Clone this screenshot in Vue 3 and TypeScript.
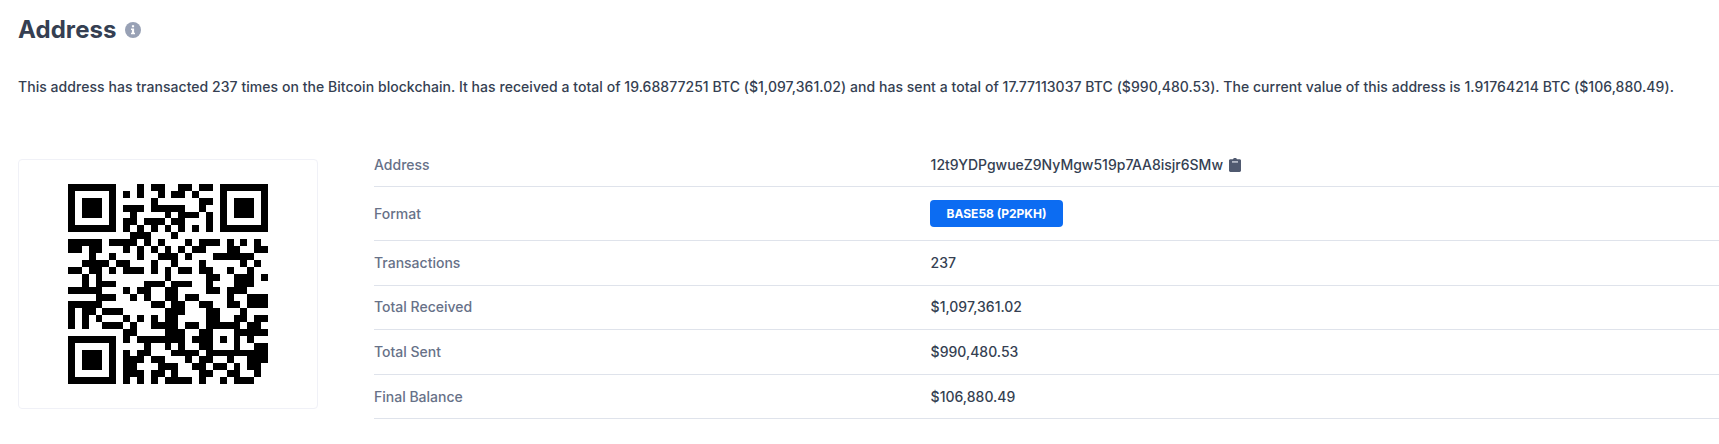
<script setup lang="ts">
interface Row {
  label: string
  value: string
  kind?: 'address' | 'badge'
}

const summary =
  'This address has transacted 237 times on the Bitcoin blockchain. It has received a total of 19.68877251 BTC ($1,097,361.02) and has sent a total of 17.77113037 BTC ($990,480.53). The current value of this address is 1.91764214 BTC ($106,880.49).'

const rows: Row[] = [
  { label: 'Address', value: '12t9YDPgwueZ9NyMgw519p7AA8isjr6SMw', kind: 'address' },
  { label: 'Format', value: 'BASE58 (P2PKH)', kind: 'badge' },
  { label: 'Transactions', value: '237' },
  { label: 'Total Received', value: '$1,097,361.02' },
  { label: 'Total Sent', value: '$990,480.53' },
  { label: 'Final Balance', value: '$106,880.49' },
]

// Dark modules per QR row, as inclusive column ranges.
const qrRows: string[] = [
  '0-6 10 12-13 16-17 19-20 22-28',
  '0 6 8 10 13 15-16 18 22 28',
  '0 2-4 6 12 19-20 22 24-26 28',
  '0 2-4 6 8-10 12-16 19 22 24-26 28',
  '0 2-4 6 9 14 16-18 20 22 24-26 28',
  '0 6 8-9 11-13 15-16 20 22 28',
  '0-6 8 10 12 14 16 18 20 22-28',
  '9-11 15',
  '0-4 6-9 11 13 17 19-21 23 25 27',
  '0-1 3-4 8 10 12 14 16 18-19 23-24 27-28',
  '3 6 10 13-15 17 21-26',
  '2-5 7-8 12 15 19 25 27',
  '0-1 3-4 6 8-10 12 14 16-17 19-20 23 26',
  '2 4 14 20-21 24-26 28',
  '2 4-6 11-13 15-17 20 24-26',
  '0-4 8 10-11 14-15 20-21 23-25',
  '4-6 9 11 14-15 17-18 23 26-28',
  '0-4 12-13 15-16 19-20 23-24 26-28',
  '0 2-3 5-7 14-16 20-21 25',
  '0 2 4 8 10 12 14-15 20-21 24-25 27-28',
  '0 2 5-7 9 12-15 17-18 20-24 26-27',
  '8-9 14-16 19-20 24-28',
  '0-6 8 10-16 18-20 22 24 26',
  '0 6 11 14 16 19-20 24 27-28',
  '0 2-4 6 8 10-11 15-18 20-28',
  '0 2-4 6 8-10 12-13 17 19-20 23 26-28',
  '0 2-4 6 8-9 13-15 18-19 21-22 24 26-27',
  '0 6 8-10 12-13 15 19-20 23-24 27',
  '0-6 8 10 12 14-17 19 22 24-26',
]

const edge = (n: number): number => Math.round((n * 200) / qrRows.length)

const qrPath = qrRows
  .map((line, y) =>
    line
      .split(' ')
      .map((range) => {
        const [from, to = from] = range.split('-').map(Number)
        const left = edge(from)
        const top = edge(y)
        return `M${left} ${top}H${edge(to + 1)}V${edge(y + 1)}H${left}Z`
      })
      .join(''),
  )
  .join('')
</script>

<template>
  <main class="page">
    <header class="heading">
      <h1>Address</h1>
      <svg class="info" viewBox="0 0 16 16" aria-hidden="true">
        <circle cx="8" cy="8" r="8" fill="#98a1b5" />
        <path
          d="M6.9 3.3h2.2v2H6.9zM6 6.5h3.1v4.3H10v1.4H6v-1.4h.9V7.9H6z"
          fill="#fff"
        />
      </svg>
    </header>

    <p class="summary">{{ summary }}</p>

    <section class="details">
      <div class="qr-card">
        <svg class="qr" viewBox="0 0 200 200" shape-rendering="crispEdges" aria-label="QR code">
          <path :d="qrPath" fill="#000" />
        </svg>
      </div>

      <dl class="table">
        <div v-for="row in rows" :key="row.label" class="row" :class="row.kind">
          <dt>{{ row.label }}</dt>
          <dd>
            <span :class="row.kind === 'badge' ? 'badge' : 'value'">{{ row.value }}</span>
            <svg v-if="row.kind === 'address'" class="copy" viewBox="0 0 12 14" aria-hidden="true">
              <path
                d="M1.4 1.2H4C4.2.4 5 0 6 0s1.8.4 2 1.2h2.6c.8 0 1.4.6 1.4 1.4v10c0 .8-.6 1.4-1.4 1.4H1.4C.6 14 0 13.4 0 12.6v-10c0-.8.6-1.4 1.4-1.4z"
                fill="#505a70"
              />
              <path d="M3 3h6v1.8H3z" fill="#b0b6c3" />
            </svg>
          </dd>
        </div>
      </dl>
    </section>
  </main>
</template>

<style>
body {
  margin: 0;
  background: #fff;
  overflow: hidden;
}
</style>

<style scoped>
.page {
  box-sizing: border-box;
  height: 444px;
  padding-left: 18px;
  overflow: hidden;
  font-family: Inter, 'Liberation Sans', sans-serif;
  font-size: 14px;
  font-weight: 500;
  color: #353f52;
}

.heading {
  display: flex;
  align-items: center;
  height: 60px;
}

h1 {
  margin: 0;
  font-size: 24px;
  line-height: 30px;
  font-weight: 700;
  letter-spacing: 0.08px;
}

.info {
  width: 16px;
  height: 16px;
  margin-left: 8px;
}

.summary {
  margin: 14px 0 0;
  line-height: 26px;
  letter-spacing: 0.047px;
  white-space: nowrap;
}

.details {
  display: flex;
  align-items: flex-start;
  gap: 56px;
  margin-top: 43px;
}

.qr-card {
  display: flex;
  flex: none;
  align-items: center;
  justify-content: center;
  box-sizing: border-box;
  width: 300px;
  height: 250px;
  margin-top: 16px;
  border: 1px solid #f0f1f7;
  border-radius: 4px;
}

.qr {
  display: block;
  width: 200px;
  height: 200px;
}

.table {
  flex: 1;
  margin: 0;
}

.row {
  display: grid;
  grid-template-columns: 556px 1fr;
  align-items: center;
  box-sizing: border-box;
  height: 44.6px;
  line-height: 18px;
  border-bottom: 1px solid #dfe3eb;
}

.row.address {
  height: 44px;
}

.row.badge {
  height: 54px;
}

dt {
  color: #677188;
}

dd {
  display: flex;
  align-items: center;
  margin: 0;
}

.value {
  margin-left: 0.6px;
}

span.badge {
  display: block;
  box-sizing: border-box;
  width: 133px;
  height: 27px;
  border-radius: 4px;
  background: #0c6cf2;
  color: #fff;
  font-size: 12px;
  line-height: 27px;
  font-weight: 700;
  text-align: center;
}

.copy {
  width: 12px;
  height: 14px;
  margin-left: 6.4px;
}
</style>
